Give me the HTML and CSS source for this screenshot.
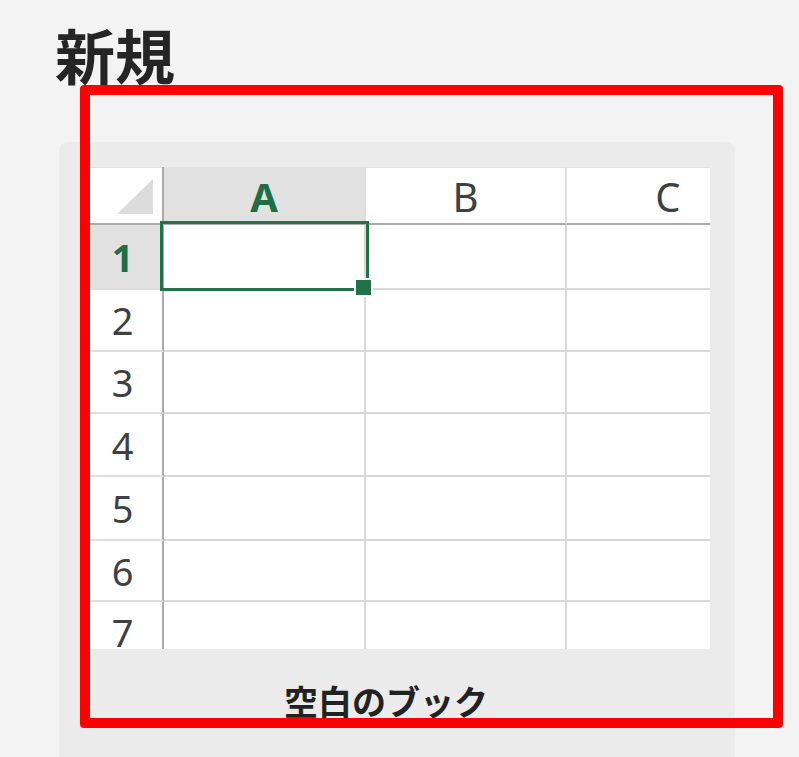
FILE: index.html
```html
<!DOCTYPE html>
<html lang="ja">
<head>
<meta charset="utf-8">
<title>新規</title>
<link rel="stylesheet" href="styles.css">
</head>
<body>
<h1 class="title">新規</h1>
<div class="card">
  <div class="sheet">
    <div class="cell corner"><span class="tri"></span></div>
    <div class="cell colhead active">A</div>
    <div class="cell colhead">B</div>
    <div class="cell colhead">C</div>

    <div class="cell rowhead active r1">1</div>
    <div class="cell r1"></div><div class="cell r1"></div><div class="cell r1"></div>

    <div class="cell rowhead r2">2</div>
    <div class="cell r2"></div><div class="cell r2"></div><div class="cell r2"></div>

    <div class="cell rowhead r3">3</div>
    <div class="cell r3"></div><div class="cell r3"></div><div class="cell r3"></div>

    <div class="cell rowhead r4">4</div>
    <div class="cell r4"></div><div class="cell r4"></div><div class="cell r4"></div>

    <div class="cell rowhead r5">5</div>
    <div class="cell r5"></div><div class="cell r5"></div><div class="cell r5"></div>

    <div class="cell rowhead r6">6</div>
    <div class="cell r6"></div><div class="cell r6"></div><div class="cell r6"></div>

    <div class="cell rowhead r7">7</div>
    <div class="cell r7"></div><div class="cell r7"></div><div class="cell r7"></div>

    <div class="selection"></div>
    <div class="handle"></div>
  </div>
  <div class="caption">空白のブック</div>
</div>
<div class="highlight"></div>
</body>
</html>
```

FILE: styles.css
```css
html, body {
  margin: 0;
  padding: 0;
  background: #f3f3f3;
  height: 757px;
  overflow: hidden;
}

body {
  font-family: "Noto Sans", "Noto Sans CJK JP", sans-serif;
  position: relative;
}

.title {
  margin: 0;
  padding: 24px 0 0 55px;
  font-family: "Noto Sans CJK JP", sans-serif;
  font-weight: 700;
  font-size: 60px;
  line-height: 60px;
  color: #252525;
}

.card {
  margin: 58px 0 0 59px;
  width: 627px;
  padding: 25px 25px 80px 24px;
  background: #ebebeb;
  border-radius: 9px;
}

.sheet {
  position: relative;
  width: 627px;
  height: 482px;
  overflow: hidden;
  background: #ffffff;
  display: grid;
  grid-template-columns: 81px 202px 201px 204px;
  grid-template-rows: 58px 65px 62px 62px 63px 64px 61px 62px;
  box-shadow: inset 0 1px 0 #e2e2e2;
}

.cell {
  box-sizing: border-box;
  border-right: 2px solid #d9d9d9;
  border-bottom: 2px solid #d9d9d9;
  display: flex;
  align-items: center;
  justify-content: center;
  color: #404040;
}

.corner {
  position: relative;
  border-right: 2px solid #ababab;
  border-bottom: 2px solid #ababab;
}

.tri {
  position: absolute;
  right: 9px;
  bottom: 9px;
  width: 0;
  height: 0;
  border-left: 36px solid transparent;
  border-bottom: 35px solid #dcdcdc;
}

.colhead {
  font-size: 40px;
  border-bottom: 2px solid #ababab;
  border-right-color: #dedede;
  padding-top: 2px;
}

.colhead.active {
  background: #e1e1e1;
  color: #1e6e44;
  font-weight: 700;
}

.rowhead {
  font-size: 38px;
  border-right: 2px solid #ababab;
  border-bottom-color: #dedede;
  padding-right: 0;
}

.rowhead.active {
  background: #e1e1e1;
  color: #1e6e44;
  font-weight: 700;
}

.selection {
  position: absolute;
  left: 77px;
  top: 54px;
  width: 203px;
  height: 64px;
  border: 3px solid #217346;
}

.handle {
  position: absolute;
  left: 271px;
  top: 111px;
  width: 15px;
  height: 15px;
  background: #217346;
  border: 2px solid #ffffff;
}

.caption {
  margin: 35px 0 0;
  padding-right: 21px;
  text-align: center;
  font-family: "Noto Sans CJK JP", sans-serif;
  font-weight: 700;
  font-size: 34px;
  line-height: 34px;
  color: #222222;
}

.highlight {
  position: absolute;
  left: 80px;
  top: 85px;
  width: 683px;
  height: 623px;
  border: 10px solid #ff0000;
  border-radius: 4px;
}
```
